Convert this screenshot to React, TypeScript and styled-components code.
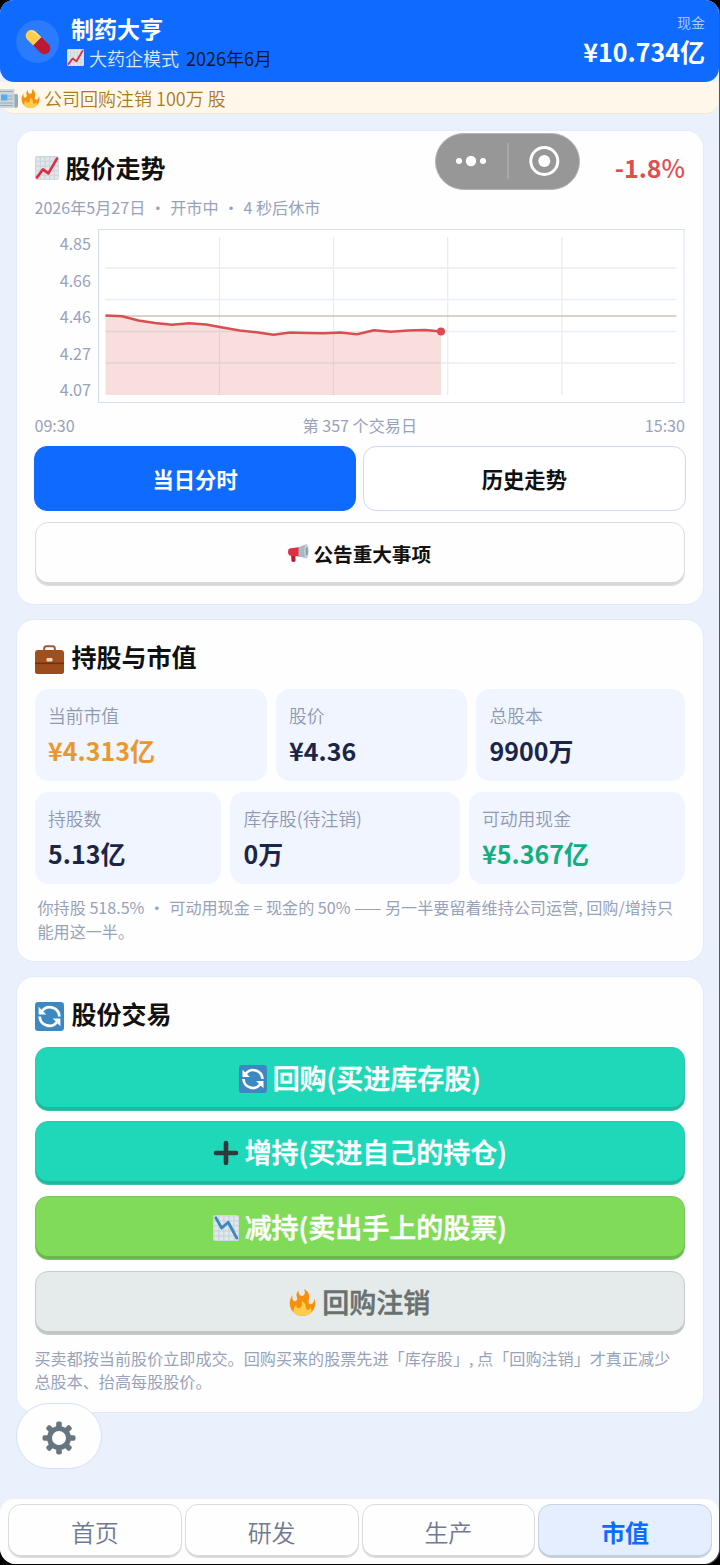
import React from "react";
import styled, { createGlobalStyle, css } from "styled-components";

const Global = createGlobalStyle`
  * { box-sizing: border-box; }
  body { margin: 0; background: #000; }
  button { font: inherit; margin: 0; padding: 0; }
`;

const Screen = styled.div`
  position: relative;
  display: flex;
  flex-direction: column;
  width: 719px;
  height: 1564px;
  border-radius: 14px 14px 16px 16px;
  overflow: hidden;
  background: #eaf1fc;
  box-shadow: 1px 1px 0 #55575d;
  font-family: "Noto Sans CJK SC", "Noto Sans", sans-serif;
  color: #111;
  white-space: nowrap;
`;

const Header = styled.header`
  display: flex;
  align-items: center;
  height: 82px;
  padding: 0 14px 0 16px;
  border-radius: 0 0 14px 14px;
  background: #0f6bff;
  color: #fff;
`;

const Avatar = styled.div`
  display: grid;
  place-items: center;
  width: 43px;
  height: 43px;
  padding-top: 2px;
  border-radius: 50%;
  background: #2b7bff;
`;

const Brand = styled.div`
  display: flex;
  flex-direction: column;
  flex: 1;
  margin-left: 8px;
  padding-top: 3px;
`;

const AppName = styled.h1`
  margin: 0 0 0 4px;
  font-size: 23px;
  font-weight: 700;
  line-height: 30px;
`;

const Mode = styled.div`
  display: flex;
  align-items: center;
  font-size: 18px;
  line-height: 30px;
  font-weight: 350;
  color: #dce9ff;
  svg { margin-right: 5px; }
`;

const GameDate = styled.span`
  margin-left: 7px;
  font-weight: 400;
  color: #111827;
`;

const Cash = styled.div`
  display: flex;
  flex-direction: column;
  align-items: flex-end;
`;

const CashLabel = styled.span`
  font-size: 14px;
  font-weight: 350;
  line-height: 20px;
  color: #b7d2ff;
`;

const CashValue = styled.strong`
  font-size: 25px;
  font-weight: 700;
  line-height: 38px;
`;

const News = styled.div`
  display: flex;
  align-items: center;
  height: 32px;
  border-bottom: 1px solid #f6e8cb;
  border-radius: 0 0 14px 14px;
  background: #fff8ea;
  font-size: 18px;
  font-weight: 350;
  color: #aa7a1c;
  span { margin-left: 4px; }
  svg { margin-top: 2px; }
  svg + svg { margin-left: 3px; }
`;

const Main = styled.main`
  display: flex;
  flex-direction: column;
  gap: 14px;
  padding: 16px 15.5px 0 16px;
`;

const Card = styled.section<{ $height: number }>`
  height: ${(p) => p.$height}px;
  padding: 0 17.5px;
  border: 1px solid #e3eaf9;
  border-radius: 18px;
  background: #fefeff;
`;

const TitleRow = styled.div<{ $top: number; $gap: number }>`
  display: flex;
  align-items: center;
  height: 36px;
  margin-top: ${(p) => p.$top}px;
  gap: ${(p) => p.$gap}px;
`;

const Title = styled.h2`
  flex: 1;
  margin: 0;
  font-size: 25px;
  font-weight: 700;
  line-height: 36px;
`;

const Lowered = styled.span<{ $by: number }>`
  display: flex;
  padding-top: ${(p) => p.$by}px;
`;

const Change = styled.span`
  font-size: 25px;
  font-weight: 700;
  color: #e04f50;
  span { font-weight: 500; }
`;

const Session = styled.div`
  margin-top: 10px;
  font-size: 16.1px;
  font-weight: 400;
  line-height: 24px;
  color: #98a2ba;
`;

const Dot = styled.span`
  margin: 0 0.8px;
`;

const Dash = styled.span`
  letter-spacing: 0.3px;
`;

const ChartRow = styled.div`
  display: flex;
  margin-top: 10px;
`;

const PriceAxis = styled.div`
  display: flex;
  flex-direction: column;
  justify-content: space-between;
  width: 56.5px;
  height: 173px;
  margin-right: 7px;
  padding: 2px 0 1px;
  text-align: right;
  font-size: 16.1px;
  font-weight: 400;
  line-height: 24px;
  color: #98a2ba;
`;

const TimeAxis = styled.div`
  display: flex;
  justify-content: space-between;
  height: 43px;
  padding-top: 10px;
  font-size: 16.1px;
  font-weight: 400;
  line-height: 24px;
  color: #98a2ba;
`;

const TabRow = styled.div`
  display: flex;
  gap: 7px;
  margin: 0 -0.5px;
`;

const ChartTab = styled.button<{ $active?: boolean }>`
  flex: 1;
  height: 65px;
  border: 1px solid ${(p) => (p.$active ? "#0f6bff" : "#cdd9f2")};
  border-radius: 13px;
  background: ${(p) => (p.$active ? "#0f6bff" : "#fff")};
  color: ${(p) => (p.$active ? "#fff" : "#111")};
  font-size: 21.3px;
  font-weight: 700;
`;

const tones = {
  plain: { bg: "#fefeff", line: "#dcdddf", edge: "#d8d8d9", text: "#111" },
  teal: { bg: "#1fd8b9", line: "#38c2a9", edge: "#20b79c", text: "#fff" },
  green: { bg: "#80dc58", line: "#7cc45d", edge: "#6bb94b", text: "#fff" },
  muted: { bg: "#e5ebea", line: "#c6cccb", edge: "#bfc6c4", text: "#68716f" },
};

const raised = css<{ $tone: keyof typeof tones }>`
  border: 1px solid ${(p) => tones[p.$tone].line};
  background: ${(p) => tones[p.$tone].bg};
  box-shadow: inset 0 -3px 0 ${(p) => tones[p.$tone].edge};
  color: ${(p) => tones[p.$tone].text};
`;

const ActionButton = styled.button<{ $tone: keyof typeof tones; $small?: boolean }>`
  ${raised}
  display: flex;
  align-items: center;
  justify-content: center;
  gap: ${(p) => (p.$small ? 4 : 6)}px;
  width: 100%;
  height: 64px;
  margin-top: ${(p) => (p.$small ? 11 : 0)}px;
  padding-bottom: ${(p) => (p.$small ? 1 : 0)}px;
  border-radius: 13px;
  font-size: ${(p) => (p.$small ? 19.6 : 27)}px;
  line-height: 36px;
  font-weight: ${(p) => (p.$small ? 700 : 500)};
  -webkit-text-stroke: ${(p) => (p.$small ? 0 : 0.5)}px currentColor;
  > span { margin-top: ${(p) => (p.$small ? 0 : -2)}px; }
`;

const Actions = styled.div`
  display: flex;
  flex-direction: column;
  gap: 10.8px;
  margin-top: 15.6px;
`;

const Tiles = styled.div<{ $columns: string; $top: number }>`
  display: grid;
  grid-template-columns: ${(p) => p.$columns};
  gap: 9px;
  margin-top: ${(p) => p.$top}px;
`;

const Tile = styled.div`
  height: 92px;
  padding: 12px 14px 0 13.5px;
  border-radius: 14px;
  background: #f0f5ff;
`;

const TileLabel = styled.div`
  font-size: 17.8px;
  font-weight: 350;
  line-height: 28px;
  color: #8f99b2;
`;

const TileValue = styled.div<{ $color?: string }>`
  margin-top: 2px;
  font-size: 25px;
  font-weight: 700;
  line-height: 38px;
  color: ${(p) => p.$color ?? "#1c2547"};
`;

const Hint = styled.p<{ $indent?: number }>`
  margin: 12px 0 0 ${(p) => p.$indent ?? 0}px;
  font-size: 16.1px;
  font-weight: 400;
  line-height: 23.5px;
  color: #98a2ba;
`;

const Capsule = styled.div`
  position: absolute;
  left: 435px;
  top: 133px;
  display: flex;
  width: 145px;
  height: 57px;
  border: 1px solid #b4b4b4;
  border-radius: 29px;
  background: #979797;
`;

const Settings = styled.button`
  position: absolute;
  left: 16px;
  top: 1403px;
  display: grid;
  place-items: center;
  width: 86px;
  height: 66px;
  padding-top: 3px;
  border: 1px solid #d5e1f7;
  border-radius: 33px;
  background: #fefeff;
`;

const Nav = styled.nav`
  display: flex;
  gap: 3px;
  height: 65px;
  margin-top: auto;
  padding: 5px 7px 0 8px;
  border-radius: 14px 14px 0 0;
  background: #fefeff;
`;

const NavItem = styled.button<{ $active?: boolean }>`
  flex: 1;
  height: 54px;
  padding-top: 1px;
  border: 1px solid ${(p) => (p.$active ? "#c8d2e5" : "#dadbdd")};
  border-radius: 13px;
  background: ${(p) => (p.$active ? "#e5eeff" : "#fefeff")};
  box-shadow: inset 0 -2px 0 ${(p) => (p.$active ? "#c3cddf" : "#d8d8d9")};
  color: ${(p) => (p.$active ? "#0f6bff" : "#6f7a92")};
  font-size: 24px;
  font-weight: ${(p) => (p.$active ? 700 : 350)};
`;

type IconProps = { size: number };

const TrendIcon = ({ size, down }: IconProps & { down?: boolean }) => (
  <svg width={size} height={size} viewBox="0 0 36 36">
    <rect width="36" height="36" rx="3" fill="#ccd6dd" />
    <g fill="#e1e8ed">
      {[2, 9, 16, 23, 30].map((y) =>
        [2, 9, 16, 23, 30].map((x) => <rect key={`${x}-${y}`} x={x} y={y} width="5" height="5" />)
      )}
    </g>
    <path
      d={down ? "M4 4L12 18L21 10L33 32" : "M3 32L12 20L20 26L33 4"}
      fill="none"
      stroke={down ? "#3b88c3" : "#dd2e44"}
      strokeWidth="4"
      strokeLinecap="round"
      strokeLinejoin="round"
    />
  </svg>
);

const PillIcon = () => (
  <svg width="30" height="30" viewBox="0 0 36 36">
    <g transform="rotate(45 18 18)">
      <path d="M15 11H5a7 7 0 0 0 0 14H15z" fill="#ffcc4d" transform="translate(2 0)" />
      <path d="M17 11h12a7 7 0 0 1 0 14H17z" fill="#be1931" />
      <path d="M4 14.500q1.500-2 5-2h5" fill="none" stroke="#ffe8b6" strokeWidth="1.400" strokeLinecap="round" />
    </g>
  </svg>
);

const NewsIcon = () => (
  <svg width="18" height="19" viewBox="0 0 18 19">
    <path d="M13 5h3.500q1.500 0 1.500 1.500V16.500q0 2.500-3 2.500H4z" fill="#99aab5" />
    <path d="M0 0h14.500v16q0 3 2 3H0z" fill="#ccd6dd" />
    <path d="M0 2.500h13M8 7h5M8 10h5M0 14h13M0 16.500h13" stroke="#99aab5" strokeWidth="1.200" />
    <rect x="1" y="5.500" width="6.500" height="6" fill="#55acee" />
  </svg>
);

const FireIcon = ({ size }: IconProps) => (
  <svg width={size} height={size} viewBox="0 0 36 36">
    <path
      d="M35 19c0-2.062-.367-4.039-1.040-5.868-.46 5.389-3.333 8.157-6.335 6.868-2.812-1.208-.917-5.917-.777-8.164.236-3.809-.012-8.169-6.931-11.794 2.875 5.500.333 8.917-2.333 9.125-2.958.231-5.667-2.542-4.667-7.042-3.238 2.386-3.332 6.402-2.333 9 1.042 2.708-.042 4.958-2.583 5.208-2.840.28-4.418-3.041-2.963-8.333C2.520 10.965 1 14.805 1 19c0 9.389 7.611 17 17 17s17-7.611 17-17z"
      fill="#f4900c"
    />
    <path
      d="M28.394 23.999c.148 3.084-2.561 4.293-4.019 3.709-2.106-.843-1.541-2.291-2.083-5.291s-2.625-5.083-5.708-6c2.250 6.333-1.247 8.667-3.080 9.084-1.872.426-3.753-.001-3.968-4.007C7.352 23.668 6 26.676 6 30c0 .368.023.730.055 1.090C9.125 34.124 13.342 36 18 36s8.875-1.876 11.945-4.910c.032-.360.055-.722.055-1.090 0-2.187-.584-4.236-1.606-6.001z"
      fill="#ffcc4d"
    />
  </svg>
);

const MegaphoneIcon = () => (
  <svg width="21" height="19" viewBox="0 0 21 19">
    <path d="M3 10h4.500v7.300q-2.500 1.500-4 0z" fill="#be1931" />
    <path d="M1.500 4.500L12 3v9.500L1.500 11.500Q0 11 0 8T1.500 4.500z" fill="#dd2e44" />
    <path d="M10.500 3.300L19 0v14.500l-8.500-2.200z" fill="#aab8c2" />
    <ellipse cx="18.600" cy="7.300" rx="2.200" ry="7.300" fill="#ccd6dd" />
    <ellipse cx="18.700" cy="7.300" rx="1" ry="4.500" fill="#8899a6" />
  </svg>
);

const BriefcaseIcon = () => (
  <svg width="29" height="29" viewBox="0 0 29 29">
    <path d="M9.200 6.500V3.500Q9.200 1.200 11.500 1.200h6Q19.800 1.200 19.800 3.500V6.500" fill="none" stroke="#9a5838" strokeWidth="2" />
    <rect y="5" width="29" height="24" rx="3" fill="#a0501e" />
    <path d="M0 18h29v8q0 3-3 3H3q-3 0-3-3z" fill="#9b4b1c" />
    <path d="M0 18.300h29" stroke="#6f3014" strokeWidth="1.500" />
    <rect x="11.500" y="13" width="6" height="3.500" rx="1" fill="#f0dcc4" />
  </svg>
);

const CycleIcon = ({ size }: IconProps) => (
  <svg width={size} height={size} viewBox="0 0 36 36">
    <rect width="36" height="36" rx="4" fill="#3b88c3" />
    <path d="M8.500 11.500A12 12 0 0 1 30.200 18M27.500 24.500A12 12 0 0 1 5.800 18" fill="none" stroke="#fff" strokeWidth="3.400" />
    <path d="M4.500 6V15.500H14zM31.500 30V20.500H22z" fill="#fff" />
  </svg>
);

const PlusIcon = () => (
  <svg width="26" height="26" viewBox="0 0 26 26">
    <path d="M13 3v20M3 13h20" stroke="#31373d" strokeWidth="4.600" strokeLinecap="round" />
  </svg>
);

const GearIcon = () => (
  <svg width="34" height="34" viewBox="-17 -17 34 34">
    <circle r="9.500" fill="none" stroke="#66757f" strokeWidth="5" />
    {[0, 45, 90, 135, 180, 225, 270, 315].map((a) => (
      <rect key={a} x="-2.800" y="-16.500" width="5.600" height="7" rx="2" fill="#66757f" transform={`rotate(${a})`} />
    ))}
  </svg>
);

const prices = [
  [7.5, 86.5], [24, 87.2], [40.500, 91.5], [57, 94], [74, 95.8], [91, 94.2], [108, 95.5],
  [124.5, 98.5], [141.5, 101.5], [158.5, 103.2], [175.5, 105.7], [192, 103.5], [209, 104],
  [226, 104.2], [242.5, 103.5], [259, 105.2], [276, 101.2], [293, 102.8], [310, 101.5],
  [327, 100.9], [343, 102.5],
];
const line = prices.map((p) => p.join(",")).join(" ");

const PriceChart = () => (
  <svg width="587" height="174" viewBox="0 0 587 174">
    <rect x=".5" y=".5" width="585.500" height="173" fill="#fff" stroke="#d8e0ef" />
    <path
      d="M7.500 39H578.500M7.500 70.500H578.500M7.500 102.500H578.500M7.500 134H578.500M121.500 8V166M235.500 8V166M349.700 8V166M464 8V166"
      stroke="#e9edf5"
      strokeWidth="1.300"
    />
    <polygon points={`7.5,166 ${line} 343,166`} fill="#e04f50" fillOpacity=".19" />
    <path d="M7.500 87H578.500" stroke="#bba595" strokeWidth="1.200" />
    <polyline points={line} fill="none" stroke="#d94f50" strokeWidth="2.500" strokeLinejoin="round" />
    <circle cx="343" cy="102.500" r="4" fill="#e04850" />
  </svg>
);

export default function App() {
  return (
    <>
      <Global />
      <Screen>
        <Header>
          <Avatar><PillIcon /></Avatar>
          <Brand>
            <AppName>制药大亨</AppName>
            <Mode><TrendIcon size={17} />大药企模式<GameDate>2026年6月</GameDate></Mode>
          </Brand>
          <Cash>
            <CashLabel>现金</CashLabel>
            <CashValue>¥10.734亿</CashValue>
          </Cash>
        </Header>
        <News><NewsIcon /><FireIcon size={19} /><span>公司回购注销 100万 股</span></News>
        <Main>
          <Card $height={475}>
            <TitleRow $top={18} $gap={7}>
              <Lowered $by={1}><TrendIcon size={24} /></Lowered>
              <Title>股价走势</Title>
              <Change>-1.8<span>%</span></Change>
            </TitleRow>
            <Session>2026年5月27日<Dot> ・ </Dot>开市中<Dot> ・ </Dot>4 秒后休市</Session>
            <ChartRow>
              <PriceAxis>
                {["4.85", "4.66", "4.46", "4.27", "4.07"].map((p) => <span key={p}>{p}</span>)}
              </PriceAxis>
              <PriceChart />
            </ChartRow>
            <TimeAxis><span>09:30</span><span>第 357 个交易日</span><span>15:30</span></TimeAxis>
            <TabRow>
              <ChartTab $active>当日分时</ChartTab>
              <ChartTab>历史走势</ChartTab>
            </TabRow>
            <ActionButton $tone="plain" $small><MegaphoneIcon /><span>公告重大事项</span></ActionButton>
          </Card>
          <Card $height={343}>
            <TitleRow $top={18} $gap={8}>
              <Lowered $by={7}><BriefcaseIcon /></Lowered>
              <Title>持股与市值</Title>
            </TitleRow>
            <Tiles $columns="232px 191.5px 1fr" $top={15}>
              <Tile><TileLabel>当前市值</TileLabel><TileValue $color="#ea982b">¥4.313亿</TileValue></Tile>
              <Tile><TileLabel>股价</TileLabel><TileValue>¥4.36</TileValue></Tile>
              <Tile><TileLabel>总股本</TileLabel><TileValue>9900万</TileValue></Tile>
            </Tiles>
            <Tiles $columns="186.500px 229.500px 1fr" $top={11}>
              <Tile><TileLabel>持股数</TileLabel><TileValue>5.13亿</TileValue></Tile>
              <Tile><TileLabel>库存股(待注销)</TileLabel><TileValue>0万</TileValue></Tile>
              <Tile><TileLabel>可动用现金</TileLabel><TileValue $color="#13ae7e">¥5.367亿</TileValue></Tile>
            </Tiles>
            <Hint $indent={3}>
              你持股 518.5%<Dot> ・ </Dot>可动用现金 = 现金的 50% <Dash>——</Dash> 另一半要留着维持公司运营, 回购/增持只<br />
              能用这一半。
            </Hint>
          </Card>
          <Card $height={437}>
            <TitleRow $top={18} $gap={8}>
              <Lowered $by={7}><CycleIcon size={29} /></Lowered>
              <Title>股份交易</Title>
            </TitleRow>
            <Actions>
              <ActionButton $tone="teal"><CycleIcon size={28} /><span>回购(买进库存股)</span></ActionButton>
              <ActionButton $tone="teal"><PlusIcon /><span>增持(买进自己的持仓)</span></ActionButton>
              <ActionButton $tone="green"><TrendIcon size={26} down /><span>减持(卖出手上的股票)</span></ActionButton>
              <ActionButton $tone="muted"><FireIcon size={27} /><span>回购注销</span></ActionButton>
            </Actions>
            <Hint>
              买卖都按当前股价立即成交。回购买来的股票先进「库存股」, 点「回购注销」才真正减少<br />
              总股本、抬高每股股价。
            </Hint>
          </Card>
        </Main>
        <Nav>
          <NavItem>首页</NavItem>
          <NavItem>研发</NavItem>
          <NavItem>生产</NavItem>
          <NavItem $active>市值</NavItem>
        </Nav>
        <Capsule>
          <svg width="143" height="55" viewBox="0 0 143 55">
            <g fill="#fff">
              <circle cx="23" cy="27" r="3" />
              <circle cx="35" cy="27" r="5.200" />
              <circle cx="47" cy="27" r="3" />
              <circle cx="108.300" cy="27" r="6" />
            </g>
            <path d="M72 9v36" stroke="#b5b5b5" strokeWidth="1.200" />
            <circle cx="108.300" cy="27" r="13.500" fill="none" stroke="#fff" strokeWidth="3" />
          </svg>
        </Capsule>
        <Settings aria-label="设置"><GearIcon /></Settings>
      </Screen>
    </>
  );
}
